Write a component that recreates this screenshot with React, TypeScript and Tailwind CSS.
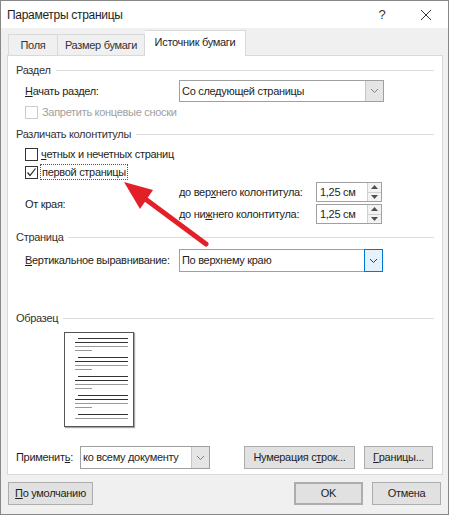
import React from 'react';

const font = { fontFamily: '"Liberation Sans", Arial, sans-serif' };

// group caption with the thin line running to the right edge
const GroupHeader = ({ title, className = '' }: { title: string; className?: string }) => (
  <div className={`flex items-center h-[16px] gap-[5px] ${className}`}>
    <span className="text-[11px] text-[#333] whitespace-nowrap">{title}</span>
    <div className="flex-1 h-px bg-[#dcdcdc]" />
  </div>
);

const Chevron = ({ color = '#606060' }: { color?: string }) => (
  <svg width="9" height="6" viewBox="0 0 9 6">
    <path d="M1 1 L4.5 4.5 L8 1" fill="none" stroke={color} strokeWidth="1" />
  </svg>
);

const Select = ({ value, width, height = 22, hot = false }: { value: string; width: string; height?: number; hot?: boolean }) => (
  <div className={`flex ${width} bg-white border border-[#a0a0a0]`} style={{ height }}>
    <div className="flex-1 flex items-center pl-[2px] text-[11px] text-[#1e1e1e] whitespace-nowrap">{value}</div>
    <div
      className={`w-[18px] flex items-center justify-center border-l ${
        hot ? 'bg-[#e5f1fb] border border-[#0078d7] -m-px w-[19px]' : 'bg-[#e5e5e5] border-[#c6c6c6]'
      }`}
    >
      <Chevron color={hot ? '#3c3c3c' : '#808080'} />
    </div>
  </div>
);

const Spinner = ({ value }: { value: string }) => (
  <div className="flex w-[66px] h-[20px] bg-white border border-[#a0a0a0]">
    <div className="flex-1 flex items-center pl-[3px] text-[11px] text-[#1e1e1e]">{value}</div>
    <div className="w-[14px] flex flex-col border-l border-[#d0d0d0] bg-[#f3f3f3]">
      <div className="flex-1 flex items-center justify-center border-b border-[#d0d0d0]">
        <svg width="7" height="4" viewBox="0 0 7 4"><path d="M0 4 L3.5 0 L7 4 Z" fill="#505050" /></svg>
      </div>
      <div className="flex-1 flex items-center justify-center">
        <svg width="7" height="4" viewBox="0 0 7 4"><path d="M0 0 L3.5 4 L7 0 Z" fill="#505050" /></svg>
      </div>
    </div>
  </div>
);

const Checkbox = ({ checked = false, disabled = false }: { checked?: boolean; disabled?: boolean }) => (
  <div
    className={`w-[13px] h-[13px] border bg-white flex items-center justify-center shrink-0 ${
      disabled ? 'border-[#cccccc]' : 'border-[#333]'
    }`}
  >
    {checked && (
      <svg width="11" height="11" viewBox="0 0 11 11">
        <path d="M1.5 5.5 L4 8.5 L9.5 1.5" fill="none" stroke="#222" strokeWidth="1.2" />
      </svg>
    )}
  </div>
);

const Button = ({ children, className = '' }: { children: React.ReactNode; className?: string }) => (
  <div className={`flex items-center justify-center bg-[#e1e1e1] border border-[#adadad] text-[11px] text-[#1e1e1e] whitespace-nowrap ${className}`}>
    {children}
  </div>
);

// the little sample page drawn in "Образец"
const PagePreview = () => {
  const groups = [339, 358, 377, 396];
  return (
    <div className="ml-[48px] mt-[6px] w-[70px] h-[95px] bg-white border border-[#555] shadow-[1px_1px_1px_rgba(0,0,0,0.35)]">
      <svg width="68" height="93" viewBox="0 0 68 93">
        {groups.map((y) => {
          const t = y - 334;
          return (
            <g key={y}>
              <rect x="13" y={t} width="50" height="1" fill="#333" />
              <rect x="10" y={t + 4} width="53" height="1" fill="#333" />
              <rect x="10" y={t + 8} width="53" height="1" fill="#999" />
              <rect x="10" y={t + 12} width="17" height="1" fill="#999" />
            </g>
          );
        })}
        <rect x="13" y="81" width="50" height="1" fill="#333" />
        <rect x="10" y="85" width="53" height="1" fill="#999" />
      </svg>
    </div>
  );
};

export default function App() {
  return (
    <div className="w-[452px] h-[516px] bg-white tracking-[-0.3px]" style={font}>
      <div className="relative w-[449px] h-[515px] bg-[#f0f0f0] border border-[#888] flex flex-col">
        {/* Title bar */}
        <div className="h-[27px] bg-white flex items-center">
          <span className="pl-[6px] text-[12px] text-[#1e1e1e]">Параметры страницы</span>
          <div className="ml-auto flex h-full">
            <div className="w-[44px] flex items-center justify-center text-[13px] text-[#333]">?</div>
            <div className="w-[44px] flex items-center justify-center">
              <svg width="12" height="12" viewBox="0 0 12 12">
                <path d="M1 1 L11 11 M11 1 L1 11" stroke="#333" strokeWidth="1" />
              </svg>
            </div>
          </div>
        </div>

        {/* Tabs */}
        <div className="flex items-end h-[25px] mt-[3px] pl-[7px] -mb-px relative z-10">
          <div className="w-[50px] h-[22px] border border-[#d9d9d9] border-b-0 flex items-center justify-center text-[11px] text-[#333]">
            Поля
          </div>
          <div className="w-[87px] h-[22px] border border-l-0 border-[#d9d9d9] border-b-0 flex items-center justify-center text-[11px] text-[#333]">
            Размер бумаги
          </div>
          <div className="w-[101px] h-[26px] bg-white border border-l-0 border-[#d9d9d9] border-b-0 flex items-center justify-center text-[11px] text-[#1e1e1e] pb-[2px]">
            Источник бумаги
          </div>
        </div>

        {/* Tab panel */}
        <div className="ml-[6px] w-[436px] h-[420px] bg-white border border-[#d9d9d9] flex flex-col px-[8px] pt-[6px]">
          <GroupHeader title="Раздел" />
          <div className="flex items-center mt-[2px] pl-[9px]">
            <span className="w-[154px] text-[11px] text-[#1e1e1e]">
              <u>Н</u>ачать раздел:
            </span>
            <Select value="Со следующей страницы" width="w-[205px]" />
          </div>
          <div className="flex items-center h-[16px] mt-[2px] pl-[9px] gap-[4px]">
            <Checkbox disabled />
            <span className="text-[11px] text-[#a0a0a0]">Запретить концевые сноски</span>
          </div>

          <GroupHeader title="Различать колонтитулы" className="mt-[6px]" />
          <div className="flex items-center h-[16px] mt-[4px] pl-[9px] gap-[3px]">
            <Checkbox />
            <span className="text-[11px] text-[#1e1e1e]">
              <u>ч</u>етных и нечетных страниц
            </span>
          </div>
          <div className="flex items-center h-[16px] mt-[2px] pl-[9px] gap-[2px]">
            <Checkbox checked />
            <span className="text-[11px] text-[#1e1e1e] border border-dotted border-[#555] px-[1px] leading-[14px]">
              первой страницы
            </span>
          </div>
          <div className="flex mt-[2px] pl-[9px]">
            <div className="w-[154px] flex items-center text-[11px] text-[#1e1e1e] pt-[2px]">От края:</div>
            <div className="flex flex-col gap-[2px]">
              <div className="flex items-center">
                <span className="w-[137px] text-[11px] text-[#1e1e1e]">
                  до вер<u>х</u>него колонтитула:
                </span>
                <Spinner value="1,25 см" />
              </div>
              <div className="flex items-center">
                <span className="w-[137px] text-[11px] text-[#1e1e1e]">
                  до ни<u>ж</u>него колонтитула:
                </span>
                <Spinner value="1,25 см" />
              </div>
            </div>
          </div>

          <GroupHeader title="Страница" className="mt-[5px]" />
          <div className="flex items-center mt-[4px] pl-[9px]">
            <span className="w-[154px] text-[11px] text-[#1e1e1e]">
              <u>В</u>ертикальное выравнивание:
            </span>
            <Select value="По верхнему краю" width="w-[204px]" height={23} hot />
          </div>

          <GroupHeader title="Образец" className="mt-[38px]" />
          <PagePreview />

          <div className="flex items-center mt-[19px] h-[23px]">
            <span className="w-[64px] text-[11px] text-[#1e1e1e]">
              Применит<u>ь</u>:
            </span>
            <Select value="ко всему документу" width="w-[130px]" height={23} />
            <Button className="ml-[34px] w-[111px] h-[23px]">
              Нумерация с<u>т</u>рок...
            </Button>
            <Button className="ml-[9px] w-[69px] h-[23px]">
              <u>Г</u>раницы...
            </Button>
          </div>
        </div>

        {/* Footer buttons */}
        <div className="flex items-center mt-[7px] pl-[7px] pr-[7px]">
          <Button className="w-[85px] h-[23px]">
            <u>П</u>о умолчанию
          </Button>
          <Button className="ml-auto w-[69px] h-[23px] border-2 border-[#0078d7]">OK</Button>
          <Button className="ml-[9px] w-[69px] h-[23px]">Отмена</Button>
        </div>

        {/* red annotation arrow */}
        <svg className="absolute inset-0 pointer-events-none" width="449" height="515" viewBox="-1 -1 449 515">
          <line x1="204" y1="242" x2="142" y2="196" stroke="#e3202a" strokeWidth="5" strokeLinecap="round" />
          <path d="M122 180 L151 188 L138 207 Z" fill="#e3202a" />
        </svg>
      </div>
    </div>
  );
}
